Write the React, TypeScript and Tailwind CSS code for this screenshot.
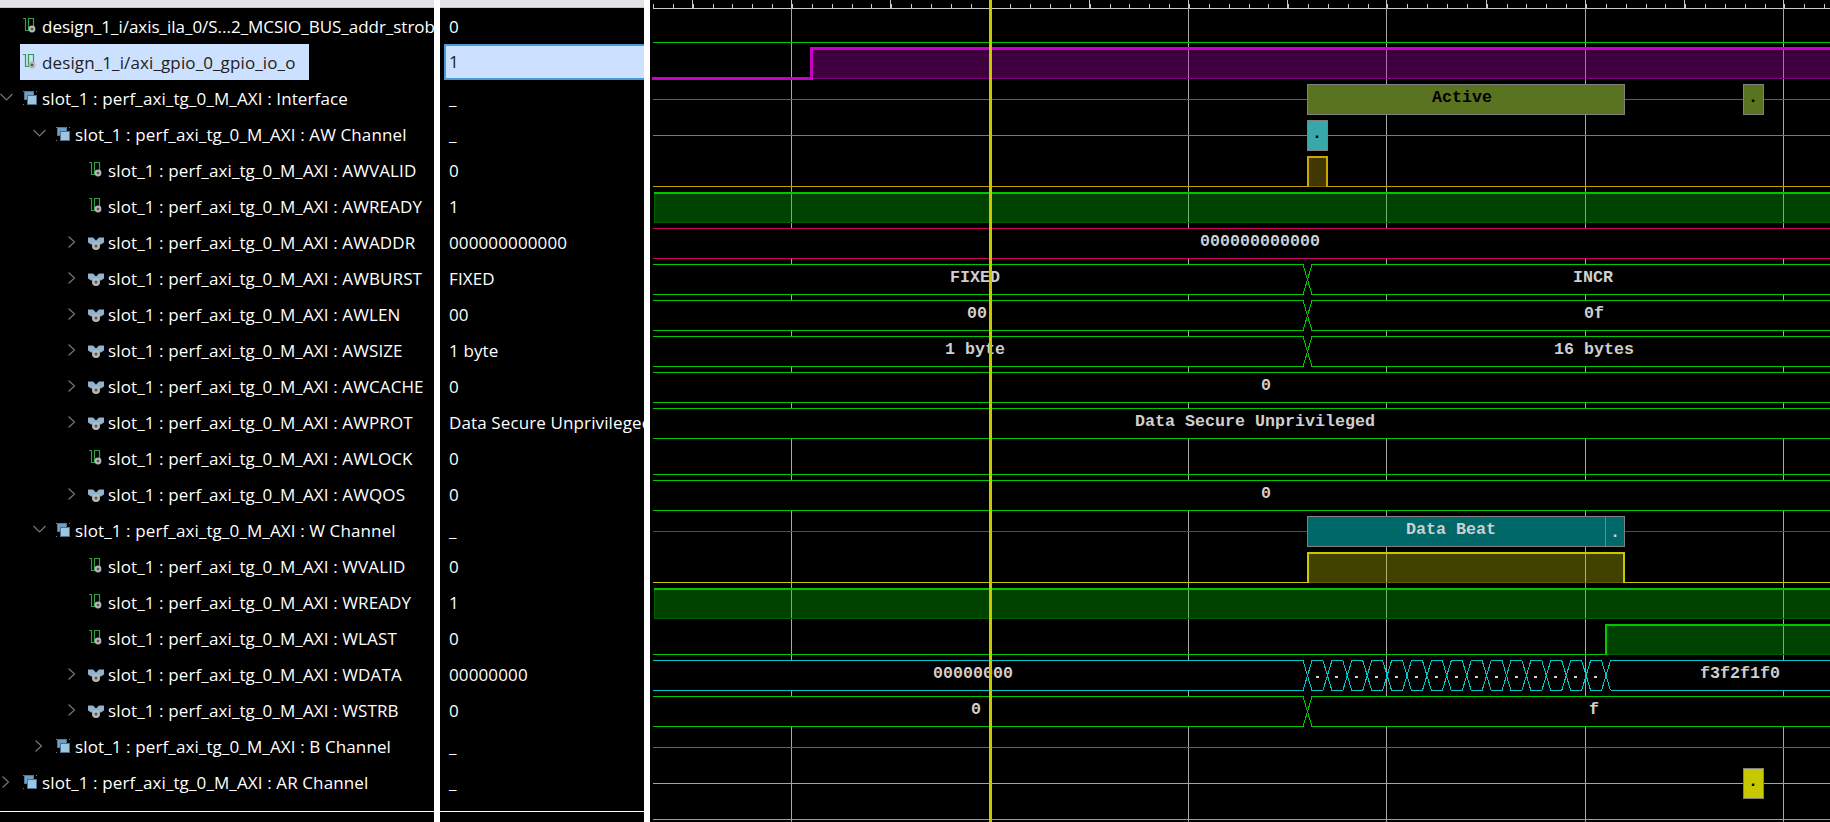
import { Fragment } from "react"

type Kind = "signal" | "group" | "bus"

type Row = {
  label: string
  value: string
  level: number
  kind: Kind
  chevron?: "down" | "right"
  selected?: boolean
  tight?: boolean
}

const P = "slot_1 : perf_axi_tg_0_M_AXI : "

const rows: Row[] = [
  { label: "design_1_i/axis_ila_0/S...2_MCSIO_BUS_addr_strob", value: "0", level: 0, kind: "signal", tight: true },
  { label: "design_1_i/axi_gpio_0_gpio_io_o", value: "1", level: 0, kind: "signal", selected: true },
  { label: P + "Interface", value: "_", level: 0, kind: "group", chevron: "down" },
  { label: P + "AW Channel", value: "_", level: 1, kind: "group", chevron: "down" },
  { label: P + "AWVALID", value: "0", level: 2, kind: "signal" },
  { label: P + "AWREADY", value: "1", level: 2, kind: "signal" },
  { label: P + "AWADDR", value: "000000000000", level: 2, kind: "bus", chevron: "right" },
  { label: P + "AWBURST", value: "FIXED", level: 2, kind: "bus", chevron: "right" },
  { label: P + "AWLEN", value: "00", level: 2, kind: "bus", chevron: "right" },
  { label: P + "AWSIZE", value: "1 byte", level: 2, kind: "bus", chevron: "right" },
  { label: P + "AWCACHE", value: "0", level: 2, kind: "bus", chevron: "right" },
  { label: P + "AWPROT", value: "Data Secure Unprivileged", level: 2, kind: "bus", chevron: "right" },
  { label: P + "AWLOCK", value: "0", level: 2, kind: "signal" },
  { label: P + "AWQOS", value: "0", level: 2, kind: "bus", chevron: "right" },
  { label: P + "W Channel", value: "_", level: 1, kind: "group", chevron: "down" },
  { label: P + "WVALID", value: "0", level: 2, kind: "signal" },
  { label: P + "WREADY", value: "1", level: 2, kind: "signal" },
  { label: P + "WLAST", value: "0", level: 2, kind: "signal" },
  { label: P + "WDATA", value: "00000000", level: 2, kind: "bus", chevron: "right" },
  { label: P + "WSTRB", value: "0", level: 2, kind: "bus", chevron: "right" },
  { label: P + "B Channel", value: "_", level: 1, kind: "group", chevron: "right" },
  { label: P + "AR Channel", value: "_", level: 0, kind: "group", chevron: "right" },
]

const LEFT = 653
const RIGHT = 1830
const EDGE = 1307.5
const GRID = [791.5, 989.5, 1188.5, 1386.5, 1585.5, 1783.5]
const GREEN = "#00c800"

function Chevron({ dir }: { dir: "down" | "right" }) {
  return (
    <svg width="14" height="14" viewBox="0 0 14 14" fill="none" stroke="#757575" strokeWidth="1.2">
      {dir === "down" ? <path d="M.5 3l6 6 6-6" /> : <path d="M2.5 1.5L8.5 7l-6 5.5" />}
    </svg>
  )
}

function RowIcon({ kind }: { kind: Kind }) {
  if (kind === "group") {
    return (
      <svg width="16" height="16" viewBox="0 0 16 16" className="shrink-0">
        <rect x="2.5" y="1.5" width="9" height="8" fill="#6f9fc6" stroke="#4f7796" />
        <rect x="5.5" y="5.5" width="9" height="9" fill="#9cc6e2" stroke="#4f6f8c" />
        <path d="M1 1h1v1H1zM14 1h1v1h-1zM1 14h1v1H1z" fill="#777" />
      </svg>
    )
  }
  if (kind === "bus") {
    return (
      <svg width="16" height="16" viewBox="0 0 16 16" className="shrink-0">
        <path d="M0 3.5h5l3 3 3-3h5v5l-3 2H3l-3-2z" fill="#8fb2d0" />
        <circle cx="8" cy="12" r="4" fill="#b8b8b8" />
        <circle cx="8" cy="12" r="1.5" fill="#555" />
      </svg>
    )
  }
  return (
    <svg width="16" height="16" viewBox="0 0 16 16" className="shrink-0">
      <path d="M1 .5h2.5v12h3V.5h5V8" fill="none" stroke="#2f9f45" strokeWidth="1.2" />
      <circle cx="10" cy="11" r="3.4" fill="#b4b4b4" />
      <circle cx="10" cy="11" r="1.3" fill="#555" />
    </svg>
  )
}

const indent = ["pl-0", "pl-[33px]", "pl-[66px]"]

function TreeRow({ row }: { row: Row }) {
  return (
    <div className={`flex h-9 items-stretch whitespace-nowrap ${indent[row.level]}`}>
      <div className="flex w-5 shrink-0 items-center">{row.chevron && <Chevron dir={row.chevron} />}</div>
      <div className={`flex items-center gap-1 pl-0.5 pr-3.5 ${row.selected ? "bg-[#cce0ff] text-[#222]" : "text-white"}`}>
        <RowIcon kind={row.kind} />
        <span className={row.tight ? "pt-px tracking-[-0.02px]" : "pt-px"}>{row.label}</span>
      </div>
    </div>
  )
}

function HeaderStrip() {
  return <div className="h-2 border-b border-[#c4c4c4] bg-[#e4e2e8]" />
}

function Hline({ y, x1 = LEFT, x2 = RIGHT, color }: { y: number; x1?: number; x2?: number; color: string }) {
  return <line x1={x1} x2={x2} y1={y + 0.5} y2={y + 0.5} stroke={color} />
}

// high level block with translucent fill, grid shows through
function High({ x1, x2 = RIGHT, top, color, dim, sides = false, rise = true }: { x1: number; x2?: number; top: number; color: string; dim: string; sides?: boolean; rise?: boolean }) {
  return (
    <g>
      <rect x={x1} y={top} width={x2 - x1} height={30} fill={color} fillOpacity={0.33} />
      <rect x={x1} y={top} width={x2 - x1} height={2} fill={color} />
      <rect x={x1} y={top + 30} width={x2 - x1} height={1} fill={dim} />
      {rise ? <rect x={x1 - 1} y={top} width={2} height={31} fill={color} /> : <rect x={x1} y={top + 2} width={1} height={29} fill={dim} />}
      {sides && <rect x={x2 - 1} y={top} width={2} height={31} fill={color} />}
    </g>
  )
}

function Label({ x, y, children, dark }: { x: number; y: number; children: string; dark?: boolean }) {
  return (
    <text
      x={x}
      y={y}
      textAnchor="middle"
      className={`font-['Liberation_Mono',monospace] text-[16.67px] font-bold tracking-normal ${dark ? "fill-black" : "fill-[#cfcfcf]"}`}
    >
      {children}
    </text>
  )
}

function Cross({ x, top, color }: { x: number; top: number; color: string }) {
  const d = `M${x - 4.5} ${top + 0.5}l9 30M${x - 4.5} ${top + 30.5}l9 -30`
  return <path d={d} fill="none" stroke={color} />
}

// bus row: opaque background hides the grid lines
function Bus({ top, color, edge }: { top: number; color: string; edge?: boolean }) {
  return (
    <g>
      <rect x={LEFT} y={top} width={RIGHT - LEFT} height={30} fill="#000" />
      {edge ? (
        <>
          <Hline y={top} x2={EDGE - 4} color={color} />
          <Hline y={top} x1={EDGE + 4} color={color} />
          <Hline y={top + 30} x2={EDGE - 4} color={color} />
          <Hline y={top + 30} x1={EDGE + 4} color={color} />
          <Cross x={EDGE} top={top} color={color} />
        </>
      ) : (
        <>
          <Hline y={top} color={color} />
          <Hline y={top + 30} color={color} />
        </>
      )}
    </g>
  )
}

function Box({ x1, x2, top, fill, line = "#808080" }: { x1: number; x2: number; top: number; fill: string; line?: string }) {
  return <rect x={x1 + 0.5} y={top + 0.5} width={x2 - x1 - 1} height={30} fill={fill} stroke={line} />
}

function Waveform() {
  const minor = Array.from({ length: 60 }, (_, i) => LEFT + i * 19.85)
  const major = [692.5, 791.5, 890.5, 989.5, 1089.5, 1188.5, 1287.5, 1386.5, 1486.5, 1585.5, 1684.5, 1783.5]
  const beats = Array.from({ length: 16 }, (_, i) => EDGE + i * 19.9)
  const CYAN = "#00c8c8"

  return (
    <svg viewBox="650 0 1180 822" width="1180" height="822" shapeRendering="crispEdges" className="block">
      <rect x="650" y="0" width="1180" height="822" fill="#000" />

      {/* ruler */}
      <Hline y={8} color="#c8c8c8" />
      {minor.map((x) => (
        <line key={x} x1={Math.round(x) + 0.5} x2={Math.round(x) + 0.5} y1={4} y2={8} stroke="#c8c8c8" />
      ))}
      {major.map((x) => (
        <line key={x} x1={x} x2={x} y1={0} y2={8} stroke="#c8c8c8" />
      ))}

      {GRID.map((x) => (
        <line key={x} x1={x} x2={x} y1={8} y2={822} stroke="#a8a8a8" />
      ))}

      {/* design signals */}
      <Hline y={42} color={GREEN} />
      <rect x="652" y="77" width="161" height="3" fill="#c800c8" />
      <rect x="810" y="47" width="3" height="33" fill="#c800c8" />
      <rect x="810" y="47" width="1020" height="3" fill="#c800c8" />
      <rect x="813" y="50" width="1017" height="28" fill="#c000c0" fillOpacity={0.33} />
      <rect x="813" y="78" width="1017" height="1" fill="#800080" />

      {/* interface, AW channel */}
      <Hline y={99} color="#5a6e20" />
      <Box x1={1307} x2={1625} top={84} fill="#5a7320" />
      <Box x1={1743} x2={1764} top={84} fill="#5a7320" />
      <Label x={1462} y={102} dark>Active</Label>
      <Label x={1753} y={102} dark>.</Label>

      <Hline y={135} color="#3f9090" />
      <Box x1={1307} x2={1328} top={120} fill="#38a8a8" />
      <Label x={1317} y={138} dark>.</Label>

      <Hline y={186} color="#c8a000" />
      <High x1={1308} x2={1327} top={156} color="#c8a800" dim="#806000" sides />

      <High x1={654} top={192} color={GREEN} dim="#006000" rise={false} />

      <Bus top={228} color="#d00060" />
      <Label x={1260} y={246}>000000000000</Label>

      <Bus top={264} color={GREEN} edge />
      <Label x={975} y={282}>FIXED</Label>
      <Label x={1593} y={282}>INCR</Label>

      <Bus top={300} color={GREEN} edge />
      <Label x={977} y={318}>00</Label>
      <Label x={1594} y={318}>0f</Label>

      <Bus top={336} color={GREEN} edge />
      <Label x={975} y={354}>1 byte</Label>
      <Label x={1594} y={354}>16 bytes</Label>

      <Bus top={372} color={GREEN} />
      <Label x={1266} y={390}>0</Label>

      <Bus top={408} color={GREEN} />
      <Label x={1255} y={426}>Data Secure Unprivileged</Label>

      <Hline y={474} color={GREEN} />

      <Bus top={480} color={GREEN} />
      <Label x={1266} y={498}>0</Label>

      {/* W channel */}
      <Hline y={531} color="#1c6464" />
      <Box x1={1307} x2={1606} top={516} fill="#006868" />
      <Box x1={1605} x2={1625} top={516} fill="#006868" />
      <Label x={1451} y={534}>Data Beat</Label>
      <Label x={1615} y={537}>.</Label>

      <Hline y={582} x2={1307} color="#c8c800" />
      <Hline y={582} x1={1625} color="#c8c800" />
      <High x1={1308} x2={1624} top={552} color="#c8c800" dim="#606000" sides />

      <High x1={654} top={588} color={GREEN} dim="#006000" rise={false} />

      <Hline y={654} x2={1606} color={GREEN} />
      <High x1={1606} top={624} color={GREEN} dim="#006000" />

      {/* WDATA: the burst part keeps the grid visible */}
      <rect x={LEFT} y={660} width={650} height={30} fill="#000" />
      <rect x={1612} y={660} width={218} height={30} fill="#000" />
      <Hline y={660} x2={EDGE - 4} color={CYAN} />
      <Hline y={690} x2={EDGE - 4} color={CYAN} />
      <Hline y={660} x1={1611} color={CYAN} />
      <Hline y={690} x1={1611} color={CYAN} />
      {beats.map((x, i) => (
        <Fragment key={x}>
          <Cross x={x} top={660} color={CYAN} />
          {i < 15 && (
            <>
              <Hline y={660} x1={x + 4} x2={x + 15.9} color={CYAN} />
              <Hline y={690} x1={x + 4} x2={x + 15.9} color={CYAN} />
              <rect x={Math.round(x + 8)} y={676} width={3} height={2} fill="#cfcfcf" />
            </>
          )}
        </Fragment>
      ))}
      <Label x={973} y={678}>00000000</Label>
      <Label x={1740} y={678}>f3f2f1f0</Label>

      <Bus top={696} color={GREEN} edge />
      <Label x={976} y={714}>0</Label>
      <Label x={1594} y={714}>f</Label>

      <Hline y={747} color="#3c6e8c" />

      <Hline y={783} color="#b8b800" />
      <Box x1={1743} x2={1764} top={768} fill="#c8c800" />
      <Label x={1753} y={786} dark>.</Label>

      <Hline y={819} color="#c8a800" />

      {/* cursor */}
      <rect x="989" y="0" width="3" height="822" fill="#c8c800" />
    </svg>
  )
}

export default function App() {
  return (
    <div className="flex h-[822px] w-[1830px] overflow-hidden bg-white font-['Open_Sans',sans-serif] text-[17px] tracking-[0.12px]">
      <div className="flex w-[434px] shrink-0 flex-col bg-black">
        <HeaderStrip />
        <div className="h-[804px] shrink-0 overflow-hidden border-b border-white">
          {rows.map((row) => (
            <TreeRow key={row.label} row={row} />
          ))}
        </div>
      </div>
      <div className="ml-1.5 flex w-[204px] shrink-0 flex-col bg-black">
        <HeaderStrip />
        <div className="h-[804px] shrink-0 overflow-hidden border-b border-white">
          {rows.map((row) => (
            <div
              key={row.label}
              className={
                row.selected
                  ? "ml-1 flex h-9 items-center border-y-2 border-l-2 border-[#4a9ad4] bg-[#cce0ff] pl-[3px] text-[#222]"
                  : "flex h-9 items-center whitespace-nowrap pl-[9px] pt-px text-white"
              }
            >
              {row.value}
            </div>
          ))}
        </div>
      </div>
      <div className="ml-1.5 flex-1">
        <Waveform />
      </div>
    </div>
  )
}
